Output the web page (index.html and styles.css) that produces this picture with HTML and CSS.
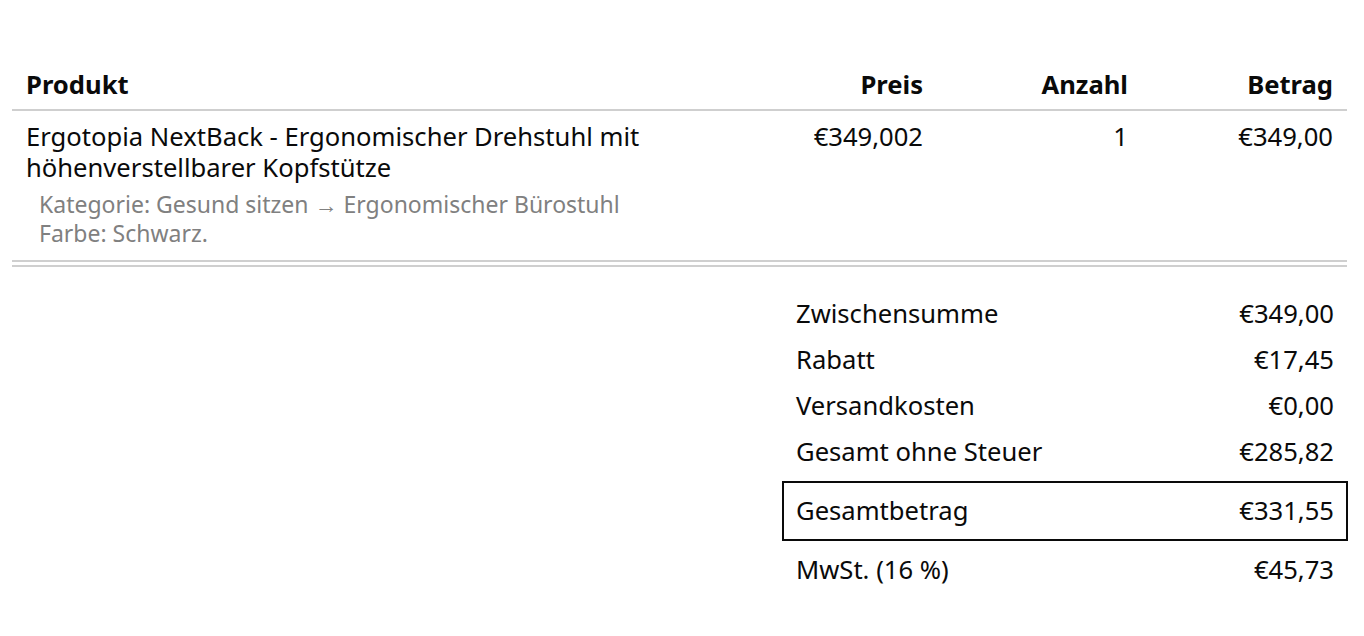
FILE: index.html
```html
<!DOCTYPE html>
<html lang="de">
<head>
<meta charset="utf-8">
<title>Bestellung</title>
<link rel="stylesheet" href="styles.css">
</head>
<body>
<div class="page">
  <table class="items">
    <thead>
      <tr>
        <th class="col-product">Produkt</th>
        <th class="col-num">Preis</th>
        <th class="col-num">Anzahl</th>
        <th class="col-num">Betrag</th>
      </tr>
    </thead>
    <tbody>
      <tr>
        <td class="col-product">
          <div class="name">Ergotopia NextBack - Ergonomischer Drehstuhl mit höhenverstellbarer Kopfstütze</div>
          <div class="meta first">Kategorie: Gesund sitzen → Ergonomischer Bürostuhl</div>
          <div class="meta">Farbe: Schwarz.</div>
        </td>
        <td class="col-num">€349,002</td>
        <td class="col-num">1</td>
        <td class="col-num">€349,00</td>
      </tr>
    </tbody>
  </table>
  <div class="totals-wrap">
    <div class="totals">
      <div class="row"><span>Zwischensumme</span><span>€349,00</span></div>
      <div class="row"><span>Rabatt</span><span>€17,45</span></div>
      <div class="row"><span>Versandkosten</span><span>€0,00</span></div>
      <div class="row"><span>Gesamt ohne Steuer</span><span>€285,82</span></div>
      <div class="row grand"><span>Gesamtbetrag</span><span>€331,55</span></div>
      <div class="row tax"><span>MwSt. (16 %)</span><span>€45,73</span></div>
    </div>
  </div>
</div>
</body>
</html>
```

FILE: styles.css
```css
html, body {
  margin: 0;
  padding: 0;
  background: #ffffff;
}

body {
  font-family: "Noto Sans", "Open Sans", sans-serif;
  color: #0a0a0a;
  font-size: 25.6px;
}

.page {
  padding: 62px 17px 0 12px;
}

.items {
  width: 100%;
  border-collapse: collapse;
}

.items th {
  font-weight: 700;
  font-size: 25.6px;
  line-height: 30px;
  padding: 8px 14px 9px 14px;
  border-bottom: 2px solid #cfcfcf;
  text-align: left;
}

.items th.col-num,
.items td.col-num {
  text-align: right;
  width: 177px;
}

.items td {
  vertical-align: top;
  padding: 10px 14px 12px 14px;
  line-height: 31px;
}

.items tbody tr {
  border-bottom: 7px double #cfcfcf;
}

.meta {
  color: #808080;
  font-size: 23px;
  line-height: 29px;
  padding-left: 13px;
}

.meta.first {
  margin-top: 7px;
}

.totals-wrap {
  display: flex;
  justify-content: flex-end;
  padding-top: 24px;
}

.totals {
  width: 566px;
  margin-right: -1px;
  display: flex;
  flex-direction: column;
}

.row {
  display: flex;
  justify-content: space-between;
  padding: 7px 14px;
  line-height: 32px;
}

.row.grand {
  margin-top: 6px;
  border: 2px solid #0a0a0a;
  padding: 12px 12px 12px 12px;
}

.row.tax {
  margin-top: 6px;
}
```
